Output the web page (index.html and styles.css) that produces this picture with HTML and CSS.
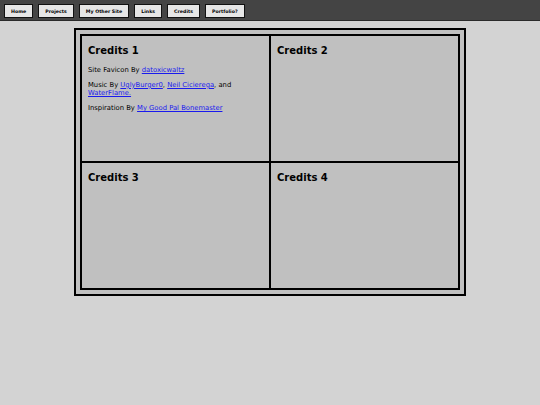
FILE: index.html
```html
<!DOCTYPE html>
<html>
<head>
<meta charset="utf-8">
<title>Credits</title>
<link rel="stylesheet" href="styles.css">
</head>
<body>
<nav class="nav">
  <a class="btn" href="#">Home</a>
  <a class="btn" href="#">Projects</a>
  <a class="btn" href="#">My Other Site</a>
  <a class="btn" href="#">Links</a>
  <a class="btn" href="#">Credits</a>
  <a class="btn" href="#">Portfolio?</a>
</nav>
<main class="frame">
  <div class="grid">
    <section class="cell">
      <h2>Credits 1</h2>
      <p>Site Favicon By <a href="#">datoxicwaltz</a></p>
      <p>Music By <a href="#">UglyBurger0</a>, <a href="#">Neil Cicierega</a>, and <a href="#">WaterFlame.</a></p>
      <p>Inspiration By <a href="#">My Good Pal Bonemaster</a></p>
    </section>
    <section class="cell">
      <h2>Credits 2</h2>
    </section>
    <section class="cell">
      <h2>Credits 3</h2>
    </section>
    <section class="cell">
      <h2>Credits 4</h2>
    </section>
  </div>
</main>
</body>
</html>
```
FILE: styles.css
```css
html, body {
  margin: 0;
  padding: 0;
}
body {
  background: #d3d3d3;
  font-family: "DejaVu Sans", Verdana, sans-serif;
  color: #000;
}
.nav {
  display: flex;
  gap: 5px;
  background: #444444;
  padding: 4px 4px 2px;
  border-bottom: 1px solid #2a2a2a;
}
.btn {
  display: flex;
  align-items: center;
  height: 12px;
  padding: 0 6px;
  background: #e6e6e6;
  border: 1px solid #111;
  color: #000;
  text-decoration: none;
  font-weight: bold;
  font-size: 4.7px;
}
.frame {
  width: 380px;
  margin: 7px auto 0;
  padding: 4px;
  border: 2px solid #000;
  background: #c0c0c0;
}
.grid {
  display: grid;
  grid-template-columns: 1fr 1fr;
  grid-template-rows: 125px 125px;
  gap: 2px;
  border: 2px solid #000;
  background: #000;
}
.cell {
  background: #c0c0c0;
  padding: 7px 6px;
}
.cell h2 {
  font-size: 10px;
  font-weight: bold;
  margin: 2px 0 10px 0;
  line-height: 11.6px;
}
.cell p {
  font-size: 6.8px;
  line-height: 7.8px;
  margin: 7.5px 0 0;
}
.cell h2 + p {
  margin-top: 0;
}
.cell a {
  color: #1a1aee;
}
```
